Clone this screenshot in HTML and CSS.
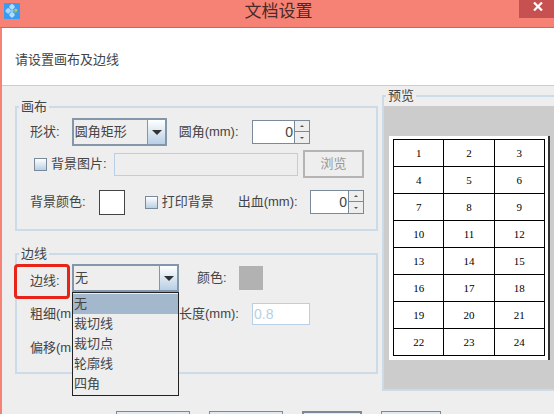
FILE: index.html
```html
<!DOCTYPE html>
<html lang="zh-CN">
<head>
<meta charset="UTF-8" />
<meta name="viewport" content="width=device-width, initial-scale=1" />
<title>文档设置</title>
<link rel="stylesheet" href="styles.css">
</head>
<body>
  <header class="titlebar">
    <svg class="app-icon" viewBox="0 0 16 16" aria-hidden="true">
      <rect width="16" height="16" rx="1" fill="#3a9bf4" />
      <rect x="5.6" y="1.4" width="4.8" height="4.8" rx="1.6" transform="rotate(45 8 3.8)" fill="#b5defb" />
      <rect x="1.8" y="5.4" width="4.8" height="4.8" rx="1.6" transform="rotate(45 4.2 7.8)" fill="#a9d8fa" />
      <rect x="5.6" y="9.4" width="4.8" height="4.8" rx="1.6" transform="rotate(45 8 11.8)" fill="#b5defb" />
      <circle cx="11.4" cy="7.6" r="2.2" fill="#7fb98a" />
      <circle cx="8" cy="7.8" r="1.4" fill="#8ccafa" />
      <circle cx="12" cy="7" r="1" fill="#d9c84e" />
    </svg>
    <h1>文档设置</h1>
    <button type="button" class="close" aria-label="关闭">
      <svg viewBox="0 0 10 9" aria-hidden="true"><path d="M1 0.5 L9 8.5 M9 0.5 L1 8.5" stroke="#fff" stroke-width="2.2" /></svg>
    </button>
  </header>

  <main class="window">
    <p class="intro">请设置画布及边线</p>

    <form class="content">
      <div class="settings">
        <fieldset class="group">
          <legend>画布</legend>
          <div class="row">
            <label for="shape">形状:</label>
            <select id="shape" class="combo combo-shape"><option>圆角矩形</option></select>
            <label for="radius" class="label-radius">圆角(mm):</label>
            <span class="spinner spinner-radius">
              <input type="text" id="radius" value="0" />
              <button type="button" class="up" aria-label="增加"></button>
              <button type="button" class="down" aria-label="减少"></button>
            </span>
          </div>
          <div class="row row-image">
            <input type="checkbox" id="bgImage" />
            <label for="bgImage">背景图片:</label>
            <input type="text" class="path" aria-label="图片路径" disabled />
            <button type="button" class="browse" disabled>浏览</button>
          </div>
          <div class="row row-color">
            <label for="bgColor">背景颜色:</label>
            <button type="button" id="bgColor" class="swatch"></button>
            <input type="checkbox" id="printBg" />
            <label for="printBg">打印背景</label>
            <label for="bleed" class="label-bleed">出血(mm):</label>
            <span class="spinner spinner-bleed">
              <input type="text" id="bleed" value="0" />
              <button type="button" class="up" aria-label="增加"></button>
              <button type="button" class="down" aria-label="减少"></button>
            </span>
          </div>
        </fieldset>

        <fieldset class="group group-line">
          <legend>边线</legend>
          <div class="row">
            <label for="line" class="marked">边线:</label>
            <div class="combo-wrap">
              <select id="line" class="combo combo-line"><option>无</option></select>
              <ul class="options" role="listbox" aria-label="边线">
                <li role="option" class="selected" aria-selected="true">无</li>
                <li role="option">裁切线</li>
                <li role="option">裁切点</li>
                <li role="option">轮廓线</li>
                <li role="option">四角</li>
              </ul>
            </div>
            <label for="lineColor" class="label-color">颜色:</label>
            <button type="button" id="lineColor" class="swatch swatch-off" disabled></button>
          </div>
          <div class="row row-size">
            <span class="label-weight">粗细(mm):</span>
            <label for="length">长度(mm):</label>
            <input type="text" id="length" class="length" value="0.8" disabled />
          </div>
          <div class="row row-offset">
            <span>偏移(mm):</span>
          </div>
        </fieldset>
      </div>

      <fieldset class="preview">
        <legend>预览</legend>
        <div class="stage">
          <div class="paper">
            <table>
              <tr><td>1</td><td>2</td><td>3</td></tr>
              <tr><td>4</td><td>5</td><td>6</td></tr>
              <tr><td>7</td><td>8</td><td>9</td></tr>
              <tr><td>10</td><td>11</td><td>12</td></tr>
              <tr><td>13</td><td>14</td><td>15</td></tr>
              <tr><td>16</td><td>17</td><td>18</td></tr>
              <tr><td>19</td><td>20</td><td>21</td></tr>
              <tr><td>22</td><td>23</td><td>24</td></tr>
            </table>
          </div>
        </div>
      </fieldset>
    </form>

    <footer class="actions">
      <button type="button" class="wide" aria-label="上一步"></button>
      <button type="button" class="wide" aria-label="下一步"></button>
      <button type="button" class="default" aria-label="完成"></button>
      <button type="button" aria-label="取消"></button>
    </footer>
  </main>
</body>
</html>
```
FILE: styles.css
```css
* {
  box-sizing: border-box;
}
body {
  margin: 0;
  height: 100vh;
  display: flex;
  flex-direction: column;
  overflow: hidden;
  background: #f58274;
  color: #444;
  font-family: "Liberation Sans", "Noto Sans CJK SC", sans-serif;
  font-size: 13px;
  line-height: 20px;
}
input,
select,
button {
  margin: 0;
  padding: 0;
  color: inherit;
  font: inherit;
  border-radius: 0;
}

/* Title bar */
.titlebar {
  display: flex;
  align-items: flex-start;
  height: 28px;
  flex: none;
  border-bottom: 1px solid #c4695e;
}
.app-icon {
  width: 16px;
  height: 16px;
  margin: 3px 0 0 4px;
}
h1 {
  flex: 1;
  margin: 0;
  padding-left: 18px;
  color: #4b2a28;
  font-size: 17px;
  font-weight: 400;
  line-height: 24px;
  text-align: center;
}
.close {
  display: flex;
  justify-content: center;
  width: 35px;
  height: 18px;
  padding: 2px 0 0 3px;
  border: 0;
  background: #c75050;
}
.close svg {
  width: 10px;
  height: 9px;
}

/* Window body */
.window {
  flex: 1;
  min-height: 0;
  overflow: hidden;
  margin-left: 2px;
  background: #eee;
}
.intro {
  margin: 0;
  padding: 22px 13px 14px;
  height: 58px;
  background: #fff;
  border-bottom: 1px solid #ccc;
}
.content {
  display: flex;
  gap: 4px;
  padding-left: 13px;
}
.settings {
  flex: 1;
  min-width: 0;
  padding-top: 11px;
}
fieldset {
  min-width: 0;
  margin: 0;
  padding: 0;
  border: 2px solid #ccdbe8;
}
legend {
  margin-left: 2px;
  padding: 0 2px;
  line-height: 20px;
}
.group {
  padding: 1px 12px 0 13px;
  height: 134px;
}
.group legend {
  margin-left: -11px;
}
.group-line {
  height: 130px;
  margin-top: 13px;
  padding-top: 0;
}
.row {
  display: flex;
  align-items: center;
  height: 28px;
}

/* Combo boxes */
.combo {
  appearance: none;
  height: 28px;
  padding-left: 1px;
  border: 2px solid #8496aa;
  background-color: #eee;
  background-image:
    url("data:image/svg+xml,%3Csvg xmlns='http://www.w3.org/2000/svg' viewBox='0 0 10 5'%3E%3Cpath d='M0 0h10L5 5z' fill='%23333'/%3E%3C/svg%3E"),
    linear-gradient(#8496aa, #8496aa),
    linear-gradient(#fff, #b8cfe5);
  background-repeat: no-repeat;
  background-position: right 3px top 10px, right 17px top 0, right top;
  background-size: 10px 5px, 1px 24px, 17px 24px;
}
.combo-shape {
  width: 95px;
  margin-left: 12px;
}
.combo-line {
  display: block;
  width: 107px;
}
.combo-wrap {
  position: relative;
  margin-left: 2px;
}
.options {
  position: absolute;
  top: 100%;
  left: 0;
  right: 0;
  margin: 0;
  padding: 1px 0;
  list-style: none;
  background: #eee;
  border: 1px solid #222;
}
.options li {
  padding-left: 1px;
}
.options .selected {
  background: #a3b8cc;
}

/* Spinners */
.spinner {
  display: grid;
  grid-template-columns: 1fr 16px;
  grid-template-rows: 12px 12px;
}
.spinner input {
  grid-row: 1 / 3;
  min-width: 0;
  padding-right: 1px;
  border: 1px solid #7a8a99;
  border-right: 0;
  font-size: 14px;
  text-align: right;
  background: #fff;
}
.spinner button {
  display: flex;
  align-items: center;
  justify-content: center;
  border: 1px solid #7a8a99;
  background: #eee;
}
.spinner button::before {
  content: "";
  border: 2px solid transparent;
}
.spinner .up::before {
  border-top: 0;
  border-bottom-color: #555;
}
.spinner .down {
  border-top: 0;
}
.spinner .down::before {
  border-bottom: 0;
  border-top-color: #555;
}
.label-radius {
  margin-left: 12px;
}
.spinner-radius {
  width: 58px;
  margin-left: auto;
  margin-right: 54px;
}
.spinner-bleed {
  width: 54px;
  margin-left: auto;
}

input[type="checkbox"] {
  appearance: none;
  width: 13px;
  height: 13px;
  border: 1px solid #7a8a99;
  background: linear-gradient(#fff, #b8cfe5);
}
.row-image {
  margin-top: 4px;
  padding-left: 4px;
}
.row-image label {
  margin-left: 4px;
}
.path {
  flex: 1;
  min-width: 0;
  height: 23px;
  margin: 0 5px 0 7px;
  border: 1px solid #b8cfe5;
  background: #eee;
}
.browse {
  width: 61px;
  height: 28px;
  border: 2px solid #b4b4b4;
  background: #eee;
  color: #999;
}
.row-color {
  margin-top: 10px;
}
.swatch {
  width: 26px;
  height: 25px;
  margin: 0 20px 0 13px;
  border: 1px solid #444;
  background: #fff;
}
.row-color input + label {
  margin-left: 4px;
}
.row-color .label-bleed {
  margin-left: 24px;
}

/* Line settings */
.marked {
  align-self: flex-start;
  width: 56px;
  height: 35px;
  margin-left: -16px;
  padding: 4px 0 0 13px;
  border: 3px solid #e82418;
  border-radius: 4px;
}
.label-color {
  margin-left: 18px;
}
.swatch-off {
  width: 24px;
  height: 24px;
  margin: 0 0 0 12px;
  border: 0;
  background: #b2b2b2;
}
.row-size {
  margin-top: 8px;
}
.label-weight {
  width: 149px;
}
.length {
  width: 58px;
  height: 22px;
  margin-left: auto;
  margin-right: 54px;
  padding-left: 1px;
  border: 1px solid #b8cfe5;
  font-size: 14px;
  background: #fff;
  color: #b8cfe5;
}
.row-offset {
  margin-top: 6px;
}

/* Preview */
.preview {
  flex: none;
  width: 172px;
  border-right: 0;
}
.stage {
  padding: 30px 4px 29px 5px;
  background: #ccc;
}
.paper {
  padding: 3px 3px 4px 4px;
  border-right: 2px solid #333;
  background: #fff;
}
table {
  width: 100%;
  border-collapse: collapse;
  color: #000;
  font-family: "Liberation Serif", serif;
  font-size: 11px;
  line-height: 26px;
  text-align: center;
}
td {
  width: 33%;
  padding: 0;
  border: 1px solid #000;
}

/* Buttons */
.actions {
  display: flex;
  justify-content: center;
  gap: 19px;
  padding-top: 20px;
}
.actions button {
  width: 60px;
  height: 28px;
  border: 1px solid #7a8a99;
  background: linear-gradient(#dde8f3, #fff 50%, #b8cfe5);
}
.actions .wide {
  width: 74px;
}
.actions .default {
  border-width: 2px;
}
```
